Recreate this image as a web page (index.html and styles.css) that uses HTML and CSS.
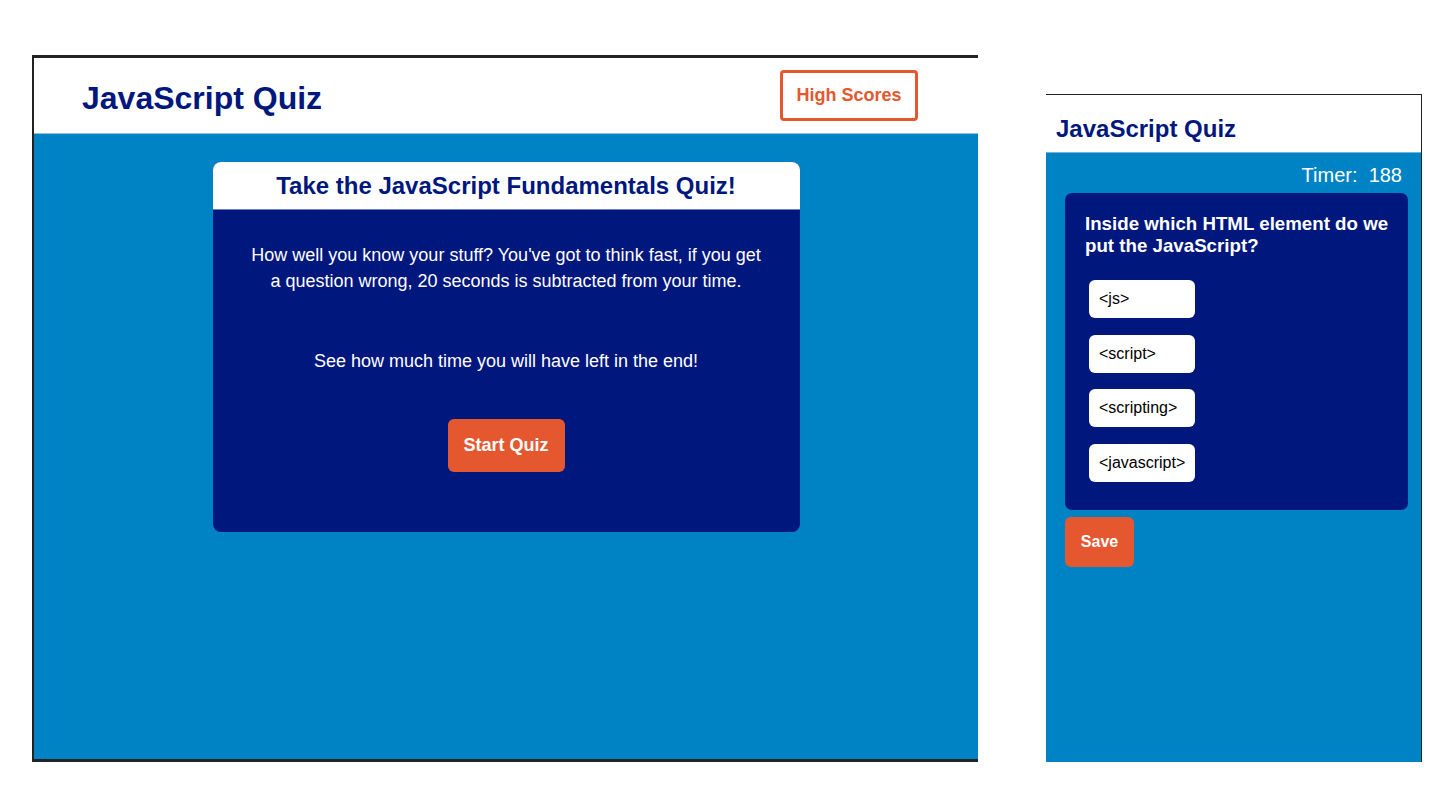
FILE: index.html
```html
<!DOCTYPE html>
<html lang="en">
<head>
<meta charset="utf-8">
<title>JavaScript Quiz</title>
<link rel="stylesheet" href="styles.css">
</head>
<body>
<div class="page">
  <section class="frame frame-main">
    <header class="main-header">
      <h1 class="main-title">JavaScript Quiz</h1>
      <button class="scores-btn">High Scores</button>
    </header>
    <div class="main-body">
      <div class="intro-card">
        <h2 class="intro-title">Take the JavaScript Fundamentals Quiz!</h2>
        <div class="intro-body">
          <p class="intro-text">How well you know your stuff? You've got to think fast, if you get a question wrong, 20 seconds is subtracted from your time.</p>
          <p class="intro-text intro-text-2">See how much time you will have left in the end!</p>
          <button class="start-btn">Start Quiz</button>
        </div>
      </div>
    </div>
  </section>

  <section class="frame frame-side">
    <header class="side-header">
      <h1 class="side-title">JavaScript Quiz</h1>
    </header>
    <div class="side-body">
      <div class="timer">Timer:&nbsp; 188</div>
      <div class="question-card">
        <h3 class="question">Inside which HTML element do we put the JavaScript?</h3>
        <div class="options">
          <button class="option">&lt;js&gt;</button>
          <button class="option">&lt;script&gt;</button>
          <button class="option">&lt;scripting&gt;</button>
          <button class="option">&lt;javascript&gt;</button>
        </div>
      </div>
      <button class="save-btn">Save</button>
    </div>
  </section>
</div>
</body>
</html>
```

FILE: styles.css
```css
* { box-sizing: border-box; }

html, body {
  margin: 0;
  padding: 0;
  background: #ffffff;
  font-family: "Liberation Sans", Arial, sans-serif;
}

.page {
  display: flex;
  align-items: flex-start;
  padding: 55px 0 0 32px;
  height: 798px;
}

button {
  font-family: "Liberation Sans", Arial, sans-serif;
  cursor: pointer;
}

/* ---------- left frame ---------- */
.frame-main {
  width: 946px;
  height: 707px;
  border-top: 3px solid #222222;
  border-left: 2px solid #222222;
  border-bottom: 3px solid #222222;
  display: flex;
  flex-direction: column;
  background: #0083c5;
}

.main-header {
  height: 76px;
  background: #ffffff;
  border-bottom: 1px solid #93bcd8;
  display: flex;
  align-items: flex-start;
  justify-content: space-between;
  padding: 0 60px 0 48px;
}

.main-title {
  margin: 0;
  font-size: 32px;
  font-weight: 700;
  color: #00177d;
  line-height: 37px;
  padding-top: 22px;
}

.scores-btn {
  margin-top: 12px;
  width: 138px;
  height: 51px;
  border: 3px solid #e5582f;
  border-radius: 4px;
  background: #ffffff;
  color: #e5582f;
  font-size: 18px;
  font-weight: 700;
  padding: 0;
}

.main-body {
  flex: 1;
  display: flex;
  justify-content: center;
  align-items: flex-start;
  padding-top: 28px;
}

.intro-card {
  width: 587px;
  height: 370px;
  border-radius: 8px;
  overflow: hidden;
  background: #00177d;
  display: flex;
  flex-direction: column;
}

.intro-title {
  margin: 0;
  height: 48px;
  background: #ffffff;
  border-bottom: 1px solid #6f7fbf;
  color: #00177d;
  font-size: 24px;
  font-weight: 700;
  text-align: center;
  line-height: 47px;
}

.intro-body {
  display: flex;
  flex-direction: column;
  align-items: center;
  padding: 32px 35px 0;
}

.intro-text {
  margin: 0;
  color: #ffffff;
  font-size: 18px;
  line-height: 26px;
  text-align: center;
}

.intro-text-2 {
  margin-top: 54px;
}

.start-btn {
  margin-top: 45px;
  width: 117px;
  height: 53px;
  border: none;
  border-radius: 6px;
  background: #e5582f;
  color: #ffffff;
  font-size: 18px;
  font-weight: 700;
  padding: 0;
}

/* ---------- right frame ---------- */
.frame-side {
  margin-left: 68px;
  margin-top: 39px;
  width: 376px;
  height: 668px;
  border-top: 1px solid #222222;
  border-right: 1px solid #222222;
  display: flex;
  flex-direction: column;
  background: #0083c5;
}

.side-header {
  height: 58px;
  background: #ffffff;
  border-bottom: 1px solid #6fb3da;
  display: flex;
  align-items: center;
  padding: 10px 0 0 10px;
}

.side-title {
  margin: 0;
  font-size: 24px;
  font-weight: 700;
  color: #00177d;
  line-height: 28px;
}

.side-body {
  display: flex;
  flex-direction: column;
  align-items: flex-start;
  padding: 0 13px 0 19px;
}

.timer {
  align-self: flex-end;
  margin-top: 11px;
  margin-right: 6px;
  color: #ffffff;
  font-size: 20px;
  line-height: 23px;
}

.question-card {
  margin-top: 6px;
  width: 343px;
  height: 317px;
  border-radius: 7px;
  background: #00177d;
  padding: 20px 6px 0 20px;
}

.question {
  margin: 0;
  color: #ffffff;
  font-size: 18.72px;
  font-weight: 700;
  line-height: 22px;
}

.options {
  display: flex;
  flex-direction: column;
  align-items: flex-start;
  gap: 16.5px;
  margin-top: 23px;
  padding-left: 4px;
}

.option {
  width: 106px;
  height: 38px;
  border: none;
  border-radius: 6px;
  background: #ffffff;
  color: #000000;
  font-size: 16px;
  text-align: left;
  padding: 0 0 0 10px;
}

.save-btn {
  margin-top: 7px;
  width: 69px;
  height: 50px;
  border: none;
  border-radius: 6px;
  background: #e5582f;
  color: #ffffff;
  font-size: 16px;
  font-weight: 700;
  padding: 0;
}
```
